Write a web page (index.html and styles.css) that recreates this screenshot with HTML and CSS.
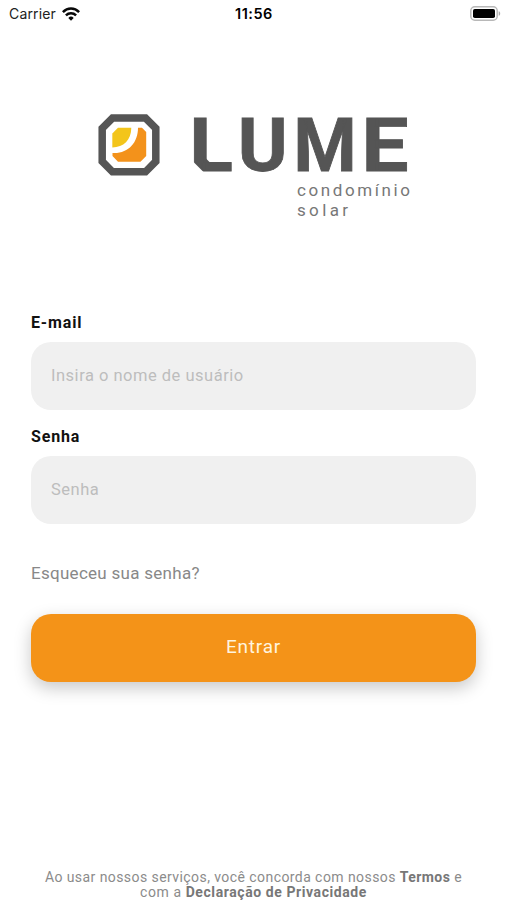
FILE: index.html
```html
<!DOCTYPE html>
<html lang="pt-BR">
<head>
<meta charset="utf-8">
<meta name="viewport" content="width=device-width, initial-scale=1">
<title>Lume</title>
<link rel="stylesheet" href="styles.css">
</head>
<body>
<div class="screen">
  <header class="status">
    <div class="carrier"><span>Carrier</span>
      <svg class="wifi" viewBox="0 0 18 14" width="18" height="14" fill="none" stroke="#080808" stroke-width="2.5"><path d="M.9 5.1C5.5.4 12.500.4 17.100 5.100M3.900 8.300c2.900-2.800 7.300-2.800 10.200 0"/><path d="M6.300 10.900a3.900 3.900 0 0 1 5.400 0L9 13.700z" fill="#080808" stroke="none"/></svg>
    </div>
    <time class="clock">11:56</time>
    <svg class="battery" viewBox="0 0 31 15" width="31" height="15"><rect x=".8" y=".8" width="26.400" height="13.400" rx="4" fill="#fff" stroke="#b8b8b8" stroke-width="1.500"/><rect x="3" y="3" width="22" height="9" rx="1.800" fill="#000"/><path d="M28.700 5.200c2 .7 2 3.900 0 4.600z" fill="#aaa"/></svg>
  </header>
  <main>
    <svg class="logo" viewBox="98 90 320 132" width="320" height="132" role="img" aria-label="Lume condomínio solar">
      <path d="M112.500 118H145.500L155.800 128.300V161.500L145.500 171.800H112.500L102.200 161.500V128.300Z" fill="#fff" stroke="#555" stroke-width="7.500"/>
      <path d="M138 127.800H142L146.200 132V156L140.500 161.800H118L112.500 156V153C128 154 138 143 138 127.800Z" fill="#f3921b"/>
      <path d="M118 127.800H131.300C131.300 140 123.500 147.500 112.300 147.500V133.500Z" fill="#f3c51b"/>
      <g class="wordmark">
        <text transform="translate(189.200 171) scale(1.097 1)">L</text>
        <text transform="translate(237.800 171) scale(1.030 1)">U</text>
        <text transform="translate(293.500 171) scale(.98 1)">M</text>
        <text transform="translate(361.500 171) scale(1.135 1)">E</text>
      </g>
      <path d="M191 159.500L204.500 173H191Z" fill="#fff"/>
      <path d="M203.500 156L210 162.500H203.500Z" fill="#555"/>
      <text class="tagline" x="297" y="196" textLength="113">condomínio</text>
      <text class="tagline" x="297" y="216" textLength="51">solar</text>
    </svg>
    <form class="login">
      <label for="email" class="label-email">E-mail</label>
      <input id="email" type="text" placeholder="Insira o nome de usuário">
      <label for="senha" class="label-senha">Senha</label>
      <input id="senha" type="password" placeholder="Senha">
      <a class="forgot">Esqueceu sua senha?</a>
      <button type="button">Entrar</button>
    </form>
  </main>
  <footer><div class="terms">Ao usar nossos serviços, você concorda com nossos <b>Termos</b> e</div><div class="privacy">com a <b>Declaração de Privacidade</b></div></footer>
</div>
</body>
</html>
```
FILE: styles.css
```css
* { box-sizing: border-box; }
body { margin: 0; background: #fff; font-family: Roboto, "Liberation Sans", sans-serif; }
.screen { height: 900px; display: flex; flex-direction: column; }
.status { height: 27px; display: grid; grid-template-columns: 1fr auto 1fr; align-items: center; padding: 0 6px 0 9px; font-family: Inter, sans-serif; }
.carrier { display: flex; align-items: center; gap: 6px; font-size: 14px; letter-spacing: .15px; color: #222; }
.clock { font-size: 14.500px; font-weight: 600; letter-spacing: .5px; margin-right: 2px; }
.battery { justify-self: end; }
main { flex: 1; }
.logo { display: block; margin: 63px 0 0 98px; }
.wordmark { font-size: 73.500px; font-weight: 700; fill: #555; stroke: #555; stroke-width: .8px; }
.tagline { font-size: 17px; fill: #777; }
.login { margin: 90px 31px 0; display: flex; flex-direction: column; }
label { font-size: 16px; line-height: 20px; font-weight: 700; letter-spacing: .85px; color: #111; }
.label-email { padding-top: 1px; height: 20px; }
input { height: 68px; border: 0; border-radius: 20px; background: #f0f0f0; padding: 0 20px 2px; font: 16.500px/20px Roboto, sans-serif; letter-spacing: .5px; margin-top: 10px; outline: 0; }
input::placeholder { color: #bdbdbd; opacity: 1; }
.label-senha { margin-top: 16px; height: 20px; padding-top: 1px; }
.forgot { margin-top: 39px; font-size: 17px; line-height: 20px; letter-spacing: .28px; color: #888; align-self: flex-start; }
button { margin-top: 31px; height: 68px; border: 0; border-radius: 20px; background: #f49318; color: #fff4df; font: 19px/24px Roboto, sans-serif; letter-spacing: .8px; padding-bottom: 3px; box-shadow: 0 6px 17px rgba(0, 0, 0, .22); }
footer { height: 30px; text-align: center; color: #8b8b8b; font-size: 14px; line-height: 15px; letter-spacing: .43px; white-space: nowrap; }
footer b { color: #777; }
.privacy { letter-spacing: .58px; }
```
